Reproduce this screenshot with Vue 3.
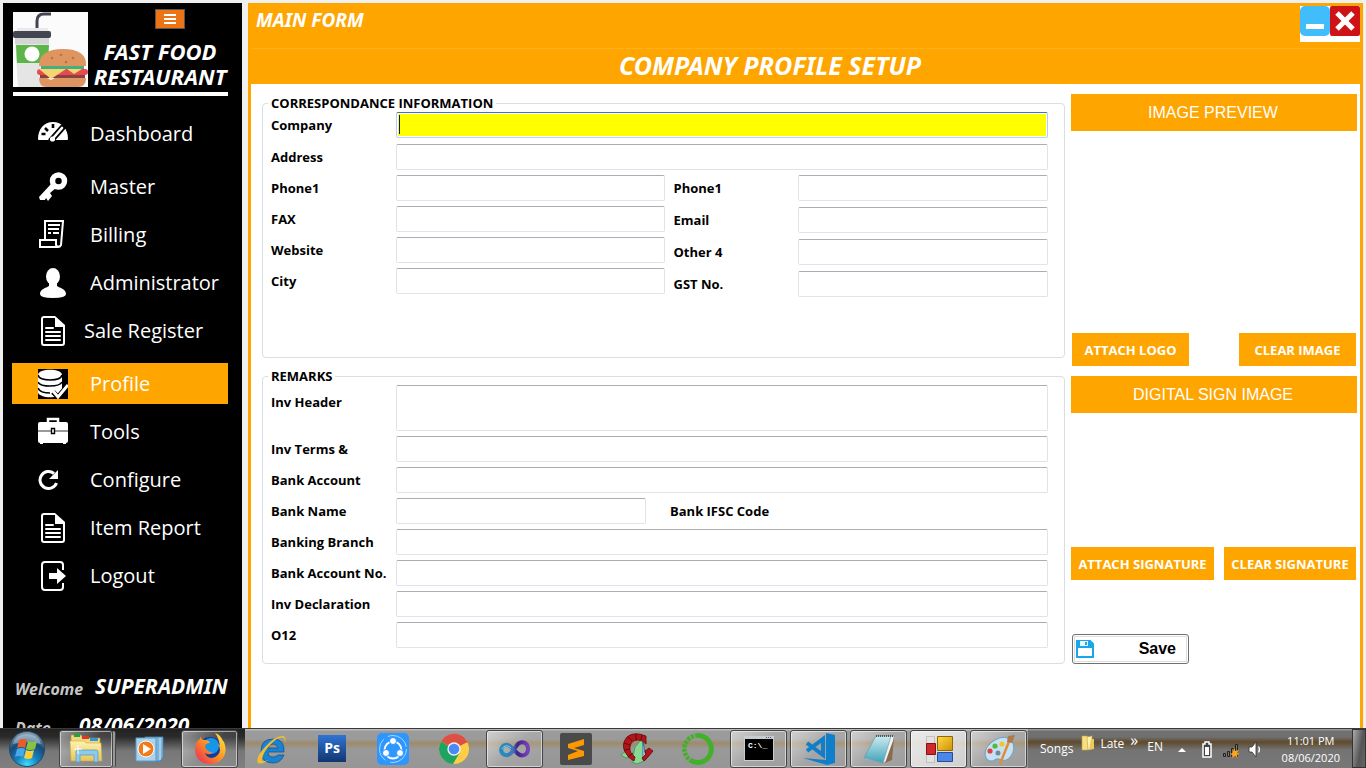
<script setup>
const menuGroups = [
  [{ label: 'Dashboard', icon: 'gauge' }],
  [
    { label: 'Master', icon: 'key' },
    { label: 'Billing', icon: 'receipt' },
    { label: 'Administrator', icon: 'user' },
    { label: 'Sale Register', icon: 'doc', wideIcon: true },
  ],
  [
    { label: 'Profile', icon: 'database', active: true },
    { label: 'Tools', icon: 'case' },
    { label: 'Configure', icon: 'reload' },
    { label: 'Item Report', icon: 'doc' },
    { label: 'Logout', icon: 'exit' },
  ],
]
const topFields = [
  { id: 'company', label: 'Company', focus: true },
  { id: 'address', label: 'Address' },
]
const leftFields = [
  { id: 'phone1', label: 'Phone1' },
  { id: 'fax', label: 'FAX' },
  { id: 'website', label: 'Website' },
  { id: 'city', label: 'City' },
]
const rightFields = [
  { id: 'phone2', label: 'Phone1' },
  { id: 'email', label: 'Email' },
  { id: 'other', label: 'Other 4' },
  { id: 'gst', label: 'GST No.' },
]
const remarkFields = [
  { id: 'header', label: 'Inv Header', tall: true },
  { id: 'terms', label: 'Inv Terms &' },
  { id: 'account', label: 'Bank Account' },
  { id: 'bank', label: 'Bank Name', extra: 'Bank IFSC Code' },
  { id: 'branch', label: 'Banking Branch' },
  { id: 'accountno', label: 'Bank Account No.' },
  { id: 'declaration', label: 'Inv Declaration' },
  { id: 'o12', label: 'O12' },
]
const pinned = [
  { icon: 'explorer', label: 'Explorer', open: true, stacked: true },
  { icon: 'media', label: 'Media Player' },
  { icon: 'firefox', label: 'Firefox', open: true },
  { icon: 'ie', label: 'Internet Explorer' },
  { icon: 'ps', label: 'Photoshop' },
  { icon: 'share', label: 'SHAREit' },
  { icon: 'chrome', label: 'Chrome' },
  { icon: 'vs', label: 'Visual Studio', open: true },
  { icon: 'sublime', label: 'Sublime Text' },
  { icon: 'ribbon', label: 'Designer' },
  { icon: 'anaconda', label: 'Anaconda' },
]
const running = [
  { icon: 'cmd', label: 'Command Prompt' },
  { icon: 'vscode', label: 'Visual Studio Code' },
  { icon: 'notepad', label: 'Notepad' },
  { icon: 'forms', label: 'Company Profile', current: true },
  { icon: 'paint', label: 'Paint' },
]
</script>

<template>
  <div class="desktop">
    <svg class="defs" aria-hidden="true">
      <defs>
        <linearGradient id="gBlue" x1="0" y1="0" x2="0" y2="1"><stop offset="0" stop-color="#2f74d4" /><stop offset="1" stop-color="#12366f" /></linearGradient>
        <radialGradient id="gOrb" cx=".5" cy=".95" r=".9"><stop offset="0" stop-color="#3fe0ff" /><stop offset=".35" stop-color="#1482c0" /><stop offset=".7" stop-color="#174a78" /><stop offset="1" stop-color="#7d99b0" /></radialGradient>
        <linearGradient id="gVs" x1="0" y1="0" x2="1" y2="0"><stop offset="0" stop-color="#1f8fc0" /><stop offset=".45" stop-color="#3f78b8" /><stop offset=".6" stop-color="#43208a" /><stop offset="1" stop-color="#7444b8" /></linearGradient>
        <linearGradient id="gFox" x1="1" y1="0" x2="0" y2="1"><stop offset="0" stop-color="#fff04a" /><stop offset=".45" stop-color="#ff9a1c" /><stop offset="1" stop-color="#e8205f" /></linearGradient>
        <linearGradient id="gPad" x1="0" y1="0" x2="0" y2="1"><stop offset="0" stop-color="#cdebf0" /><stop offset="1" stop-color="#3fa3b8" /></linearGradient>
        <linearGradient id="gGold" x1="0" y1="0" x2="1" y2="1"><stop offset="0" stop-color="#ffd84a" /><stop offset="1" stop-color="#cf9200" /></linearGradient>
        <linearGradient id="gFolder" x1="0" y1="0" x2="0" y2="1"><stop offset="0" stop-color="#fff3b0" /><stop offset="1" stop-color="#e6c65a" /></linearGradient>
      </defs>
      <symbol id="gauge" viewBox="0 0 30 30">
        <path d="M0 20C0 10 6 3 15 3s15 7 15 17c0 1-1 1-2 1H2c-1 0-2 0-2-1z" fill="#fff" />
        <path d="M3.500 15h4M7 9l3 3M15 5v4" stroke="#000" stroke-width="2.600" />
        <path d="M25 8L13.500 21" stroke="#000" stroke-width="6" stroke-linecap="round" /><path d="M24 9L14 20.500" stroke="#fff" stroke-width="2.600" stroke-linecap="round" />
        <circle cx="14.500" cy="20" r="2.600" fill="#fff" />
      </symbol>
      <symbol id="key" viewBox="0 0 30 30">
        <path d="M13 12L1 25l1 3 5 0 1-2 2 3 4-5-2-3 6-5z" fill="#fff" />
        <circle cx="20.500" cy="9" r="6" fill="none" stroke="#fff" stroke-width="5.500" />
      </symbol>
      <symbol id="receipt" viewBox="0 0 30 30">
        <path d="M7 20V1h18l-2 24q-1 2-3 2H2v-7h16v5q1 2 3 2" fill="none" stroke="#fff" stroke-width="2" />
        <path d="M10 5h12M10 9h11M10 13h3M15 13h6" stroke="#fff" stroke-width="2" />
      </symbol>
      <symbol id="user" viewBox="0 0 30 30">
        <ellipse cx="15" cy="8.500" rx="7" ry="8.500" fill="#fff" />
        <path d="M11 14h8v4c3 2 9 3 9 8q0 4-13 4T2 26c0-5 6-6 9-8z" fill="#fff" />
      </symbol>
      <symbol id="doc" viewBox="0 0 30 30">
        <path d="M17 1H6Q4 1 4 3v24q0 2 2 2h18q2 0 2-2V10" fill="none" stroke="#fff" stroke-width="2" />
        <path d="M17 0l10 9v2H17z" fill="#fff" />
        <path d="M8 12h7M8 16h14M8 20h14M8 24h14" stroke="#fff" stroke-width="2" stroke-linecap="round" />
      </symbol>
      <symbol id="database" viewBox="0 0 30 30">
        <path d="M0 0h30v30H0z" fill="#000" />
        <path d="M0 6C0-1 24-1 24 6v17c-3 8-24 6-24 0z" fill="#fff" />
        <path d="M0 6q1 5 12 5t12-5M0 13q2 4 12 4t12-4M0 19q2 5 12 5" fill="none" stroke="#000" stroke-width="1.600" />
        <path d="M15 23l5 5 10-12" fill="none" stroke="#000" stroke-width="5" /><path d="M15 22l5 6 10-12" fill="none" stroke="#fff" stroke-width="3" />
      </symbol>
      <symbol id="case" viewBox="0 0 30 30">
        <path d="M10 5V2h10v3" fill="none" stroke="#fff" stroke-width="2.500" />
        <path d="M2 5h26q2 0 2 2v17q0 2-2 2v1h-3v-1H5v1H2v-1q-2 0-2-2V7q0-2 2-2z" fill="#fff" />
        <path d="M0 14h30" stroke="#999" stroke-width="2" /><path d="M13.500 11.500h3v5h-3z" fill="#fff" stroke="#000" stroke-width="1.400" />
      </symbol>
      <symbol id="reload" viewBox="0 0 30 30">
        <path d="M16 8.500A8.500 8.500 0 1 0 18.500 18" fill="none" stroke="#fff" stroke-width="3" />
        <path d="M20 5v9H11z" fill="#fff" />
      </symbol>
      <symbol id="exit" viewBox="0 0 30 30">
        <path d="M25 9V4q0-3-3-3H7Q4 1 4 4v22q0 3 3 3h15q3 0 3-3v-4" fill="none" stroke="#fff" stroke-width="2" />
        <path d="M11 12h8V7l9 8-9 8v-5h-8z" fill="#fff" />
      </symbol>

      <symbol id="explorer" viewBox="0 0 34 34">
        <path d="M2 7V3h10l2 3h17v22H2z" fill="#f3d77e" stroke="#b8963c" stroke-width=".6" />
        <path d="M5 2h6v3H5z" fill="#1ca832" /><path d="M13 4h7v3h-7z" fill="#d83a2a" /><path d="M21 6h8v3h-8z" fill="#2a9ae0" />
        <path d="M1 9h14l2 2h15l1 18H2z" fill="url(#gFolder)" stroke="#caa64a" stroke-width=".6" />
        <path d="M7 30V20q0-2 2-2h18q2 0 2 2v10h-4v-7H11v7z" fill="#8ecbea" stroke="#5a9cc8" stroke-width=".8" />
        <path d="M9 13v9M5 17h8" stroke="#fff" stroke-width="1" />
      </symbol>
      <symbol id="media" viewBox="0 0 34 34">
        <path d="M13 5h18v20l-3 4H13z" fill="#78b4dc" stroke="#4a89b5" stroke-width=".8" /><path d="M28 6v22" stroke="#cfe7f5" />
        <path d="M4 6h20v23H4z" fill="#a8d4ef" stroke="#5d9bc4" />
        <circle cx="14" cy="17" r="8" fill="#f47a18" stroke="#fff" /><path d="M11 12l8 5-8 5z" fill="#fff" />
      </symbol>
      <symbol id="firefox" viewBox="0 0 34 34">
        <circle cx="17" cy="18" r="13" fill="#173b9c" /><circle cx="18" cy="14" r="8" fill="#1696e8" />
        <path d="M7 4q1 4 5 4 4 0 5 3-5 0-5 4 3 6 8 5-3 4-8 1 3 7 10 4 8-5 3-13 2 1 2 3Q26 6 22 1q5 1 8 8l1 1q4 10-2 17-6 6-14 5Q2 30 2 16 3 9 7 7z" fill="url(#gFox)" />
      </symbol>
      <symbol id="ie" viewBox="0 0 34 34">
        <path d="M30 20H14q0 5 5 5 3 0 5-2h6q-3 8-11 8Q7 31 7 19T19 7q12 0 11 13zM14 16h10q-1-4-5-4t-5 4z" fill="#1a83d0" stroke="#0d4f93" stroke-width=".7" fill-rule="evenodd" />
        <path d="M31 11q2-7-3-7-7 0-17 11T4 31q4 2 10-3-7 3-6-1 1-7 9-15T30 6q1 1 1 5z" fill="#f4bd30" />
      </symbol>
      <symbol id="ps" viewBox="0 0 34 34">
        <path d="M3 3h28v27H3z" fill="url(#gBlue)" />
      </symbol>
      <symbol id="share" viewBox="0 0 34 34">
        <rect x="1" y="1" width="32" height="32" rx="5" fill="#2d97ff" />
        <circle cx="17" cy="17" r="13.500" fill="none" stroke="#b9dcff" stroke-width=".9" stroke-dasharray="24 5" />
        <circle cx="17" cy="18" r="8.500" fill="none" stroke="#fff" stroke-width="1.800" />
        <circle cx="17" cy="9" r="3.500" fill="#fff" stroke="#2d97ff" /><circle cx="10" cy="21" r="3.500" fill="#fff" stroke="#2d97ff" /><circle cx="24" cy="21" r="3.500" fill="#fff" stroke="#2d97ff" />
      </symbol>
      <symbol id="chrome" viewBox="0 0 34 34">
        <circle cx="17" cy="17" r="15" fill="#ffce44" />
        <path d="M17 17L4 9.500A15 15 0 0 1 30.500 10z" fill="#dd5144" /><path d="M4 9.500A15 15 0 0 0 16 32l6.500-11L17 17z" fill="#1ea362" />
        <path d="M17 10h13.500" stroke="#dd5144" stroke-width="1" />
        <circle cx="17" cy="17" r="6.700" fill="#f1f1f1" /><circle cx="17" cy="17" r="5.300" fill="#4a8af4" />
      </symbol>
      <symbol id="vs" viewBox="0 0 34 34">
        <path d="M3 18c1-6 7-7 11-2l5 5c4 4 11 3 11-4s-7-9-11-4l-5 7c-4 5-10 4-11-2z" fill="none" stroke="url(#gVs)" stroke-width="4" />
        <path d="M4 17c2-4 6-4 9-1" fill="none" stroke="#8bd7ec" stroke-width="1" />
      </symbol>
      <symbol id="sublime" viewBox="0 0 34 34">
        <rect x="1" y="1" width="32" height="32" rx="2" fill="#4a4a4a" />
        <path d="M9 12l16-5v6L15 16l10 3v5L9 28v-5l10-4-10-3z" fill="#ff9800" />
      </symbol>
      <symbol id="ribbon" viewBox="0 0 34 34">
        <path d="M1 23l6-5 4 6-5 2zM12 30l3-15 7-8 4 21-9 4z" fill="#86d892" stroke="#3b8c48" stroke-width=".7" /><path d="M23 9l3 18-3 1z" fill="#e4f0ff" stroke="#3568a8" />
        <path d="M26 4Q14-1 7 5 1 12 5 20q3 6 9 9l1-4q-6-4-5-10 1-7 8-7 5 0 8 4zM25 19l4-3 4 3-5 6-4 4-2-3 4-4z" fill="#b31519" stroke="#5c0a0c" stroke-width=".8" />
        <path d="M8 5l4 4M4 11l6 2M4 18l6-1M8 25l5-4M16 2l0 6M22 3l-1 5" stroke="#5c0a0c" stroke-width=".9" />
      </symbol>
      <symbol id="anaconda" viewBox="0 0 34 34">
        <path d="M17 3.500a13.500 13.500 0 1 1-8 24.500" fill="none" stroke="#43b02a" stroke-width="5" />
        <path d="M17 3.500A13.500 13.500 0 0 0 9 28" fill="none" stroke="#43b02a" stroke-width="4.500" stroke-dasharray="3 1.200" />
      </symbol>
      <symbol id="cmd" viewBox="0 0 34 34">
        <path d="M2 4h30v25H2z" fill="#c8ccd0" /><path d="M3 7h28v21H3z" fill="#000" /><path d="M24 5.500h6" stroke="#456" stroke-dasharray="1 1" />
      </symbol>
      <symbol id="vscode" viewBox="0 0 34 34">
        <path d="M24 1l9 2v28l-8 2L1 26l23 2z" fill="#0f7ecb" />
        <path d="M5 11l16 12V7L5 19" fill="none" stroke="#0f7ecb" stroke-width="4" />
      </symbol>
      <symbol id="notepad" viewBox="0 0 34 34">
        <path d="M14 4h18l-2 23-9 4L2 27z" fill="#f2f2f2" stroke="#99a" stroke-width=".7" /><path d="M14 4h15l-8 27-19-5z" fill="url(#gPad)" stroke="#609aa8" stroke-width=".6" />
        <path d="M14 4h17" stroke="#555" stroke-width="2" stroke-dasharray="1 1" /><path d="M32 6l-2 22-7 3z" fill="#8a6b4b" />
      </symbol>
      <symbol id="forms" viewBox="0 0 34 34">
        <path d="M4.500 4.500h8v26h-8z" fill="#e2e2e2" stroke="#aaa" stroke-width=".6" />
        <path d="M4.500 11.500h9v11h-9z" fill="#d1292b" stroke="#831012" /><path d="M15.500 4.500h15v14h-15z" fill="url(#gGold)" stroke="#8d6805" /><path d="M15.500 20.500h15v9h-15z" fill="#4c86e8" stroke="#264d96" />
      </symbol>
      <symbol id="paint" viewBox="0 0 34 34">
        <path d="M3 22q0-8 10-14t17 1q4 8-1 15t-12 3q-3-1-6 2-7 1-8-7z" fill="#c4e2f4" stroke="#6d9fc2" />
        <circle cx="8" cy="19" r="2.600" fill="#e04040" /><circle cx="13" cy="14" r="2.600" fill="#55b845" /><circle cx="20" cy="12" r="2.600" fill="#f5c22c" /><circle cx="16" cy="21" r="2.500" fill="#738a99" />
        <path d="M28 7L18 32" stroke="#e58a35" stroke-width="2.500" /><path d="M26 4l7-1-3 8-5-1z" fill="#ae7a4d" />
      </symbol>
    </svg>

    <div class="workspace">
      <aside class="sidebar">
        <header class="brand">
          <svg class="brand-logo" viewBox="0 0 75 75" role="img" aria-label="Fast food">
            <path d="M0 0h75v75H0z" fill="#fbfbfb" />
            <path d="M24 17V9q0-7 7-7h7" fill="none" stroke="#434553" stroke-width="3" />
            <path d="M4 16h31v4H4z" fill="#e9e9e9" /><rect y="19" width="38" height="7" rx="2" fill="#434553" />
            <path d="M2 26h34l-3 49H5z" fill="#e5e5e5" /><path d="M2 26h34v6H2z" fill="#d5d5d5" /><path d="M3 33h33l-1 18H4z" fill="#5cb548" /><circle cx="19" cy="42" r="7.500" fill="#fff" />
            <path d="M26 54q0-17 24-17t23 17z" fill="#df955f" /><path d="M28 54h43v3H28z" fill="#45b07e" />
            <rect x="24" y="57" width="51" height="6" rx="3" fill="#e9494d" /><path d="M27 63h45v3H27z" fill="#874245" />
            <path d="M26 57h27L38 67zM54 57h15l-8 5z" fill="#f4d56f" /><path d="M26 66h8l4 2 4-2h31q0 9-8 9H34q-8 0-8-9z" fill="#df955f" />
            <g fill="#b87445"><circle cx="39" cy="46" r="1.300" /><circle cx="48" cy="43" r="1.300" /><circle cx="53" cy="50" r="1.300" /><circle cx="60" cy="46" r="1.300" /></g>
          </svg>
          <div class="brand-text">
            <button class="menu-toggle" type="button" aria-label="Menu">
              <svg viewBox="0 0 12 12"><path d="M0 2h12M0 6h12M0 10h12" stroke="#fff" stroke-width="2" /></svg>
            </button>
            <h1>FAST FOOD<br />RESTAURANT</h1>
          </div>
        </header>
        <nav class="menu">
          <ul v-for="(group, g) in menuGroups" :key="g">
            <li v-for="item in group" :key="item.label">
              <a href="#" :class="{ active: item.active, 'near-icon': item.wideIcon }">
                <svg><use :href="'#' + item.icon" /></svg>
                <span>{{ item.label }}</span>
              </a>
            </li>
          </ul>
        </nav>
        <dl class="session">
          <div><dt>Welcome</dt><dd>SUPERADMIN</dd></div>
          <div><dt>Date</dt><dd class="date">08/06/2020</dd></div>
        </dl>
      </aside>

      <main class="window">
        <header class="titlebar">
          <span class="form-name">MAIN FORM</span>
          <div class="window-buttons">
            <button type="button" aria-label="Minimize"><svg viewBox="0 0 30 30"><rect width="30" height="30" rx="5" fill="#42bdfc" /><path d="M6 18h18v5H6z" fill="#fff" /></svg></button>
            <button type="button" aria-label="Close"><svg viewBox="0 0 30 30"><rect width="30" height="30" rx="2" fill="#cf1215" /><path d="M7 7l16 16M23 7L7 23" stroke="#fff" stroke-width="5" /></svg></button>
          </div>
        </header>
        <h2 class="page-title">COMPANY PROFILE SETUP</h2>
        <form class="content" @submit.prevent>
          <div class="forms">
            <fieldset class="correspondence">
              <legend>CORRESPONDANCE INFORMATION</legend>
              <div class="stack wide">
                <div v-for="f in topFields" :key="f.id" class="row">
                  <label :for="f.id">{{ f.label }}</label>
                  <input :id="f.id" type="text" :class="{ focused: f.focus }" />
                </div>
              </div>
              <div class="pair">
                <div class="stack left">
                  <div v-for="f in leftFields" :key="f.id" class="row">
                    <label :for="f.id">{{ f.label }}</label><input :id="f.id" type="text" />
                  </div>
                </div>
                <div class="stack right">
                  <div v-for="f in rightFields" :key="f.id" class="row">
                    <label :for="f.id">{{ f.label }}</label><input :id="f.id" type="text" />
                  </div>
                </div>
              </div>
            </fieldset>
            <fieldset class="remarks">
              <legend>REMARKS</legend>
              <div class="stack">
                <div v-for="f in remarkFields" :key="f.id" class="row" :class="{ tall: f.tall, short: f.extra }">
                  <label :for="f.id">{{ f.label }}</label>
                  <textarea v-if="f.tall" :id="f.id"></textarea>
                  <input v-else :id="f.id" type="text" />
                  <span v-if="f.extra" class="extra">{{ f.extra }}</span>
                </div>
              </div>
            </fieldset>
          </div>
          <div class="images">
            <section class="image-box logo-box">
              <h3>IMAGE PREVIEW</h3>
              <div class="actions"><button type="button">ATTACH LOGO</button><button type="button">CLEAR IMAGE</button></div>
            </section>
            <section class="image-box sign-box">
              <h3>DIGITAL SIGN IMAGE</h3>
              <div class="actions"><button type="button">ATTACH SIGNATURE</button><button type="button">CLEAR SIGNATURE</button></div>
            </section>
            <button class="save" type="submit">
              <svg viewBox="0 0 18 18"><path d="M1 1h13l3 3v13H1z" fill="#fff" stroke="#1aa7ea" stroke-width="2" /><path d="M1 1h13l3 3v4H1z" fill="#1aa7ea" /><path d="M4 1h8v5H4z" fill="#e8f6fd" /><path d="M10 2v3" stroke="#1aa7ea" stroke-width="2" /></svg>
              <span>Save</span>
            </button>
          </div>
        </form>
      </main>
    </div>

    <footer class="taskbar">
      <button class="start" type="button" aria-label="Start">
        <svg viewBox="0 0 38 38"><circle cx="19" cy="19" r="17.500" fill="url(#gOrb)" stroke="#244866" /><path d="M5 14Q8 4 19 4t14 10q-13-4-28 0z" fill="#fff" opacity=".35" />
          <path d="M11 10q4-2 8 0l-2 8q-4-2-8 0z" fill="#ec5a28" /><path d="M20 11q4 2 9 0l-2 8q-5 2-9 0z" fill="#86c440" /><path d="M9 19q4-2 8 0l-2 8q-4-2-8 0z" fill="#48a8e8" /><path d="M18 20q4 2 8 0l-2 8q-4 2-8 0z" fill="#fccd35" /></svg>
      </button>
      <div class="apps">
        <button v-for="a in pinned" :key="a.icon" type="button" :aria-label="a.label" class="app" :class="{ open: a.open, stacked: a.stacked }">
          <svg viewBox="0 0 34 34"><use :href="'#' + a.icon" /><text v-if="a.icon === 'ps'" class="ps-text" x="17" y="21" text-anchor="middle">Ps</text></svg>
        </button>
      </div>
      <div class="apps running">
        <button v-for="a in running" :key="a.icon" type="button" :aria-label="a.label" class="app open" :class="{ current: a.current }">
          <svg viewBox="0 0 34 34"><use :href="'#' + a.icon" /><text v-if="a.icon === 'cmd'" class="cmd-text" x="6" y="16">C:\_</text></svg>
        </button>
      </div>
      <div class="tray">
        <span class="songs">Songs</span>
        <span class="late"><svg viewBox="0 0 14 16"><path d="M1 1h5l1 2v12H1z" fill="#f5de86" stroke="#c9a63a" stroke-width=".6" /><path d="M6 2l5-1v12l-4 2z" fill="#fff1aa" stroke="#c9a63a" stroke-width=".6" /><path d="M10 4h3v10l-5 1z" fill="#e9c95f" /></svg>Late</span>
        <span class="more">»</span>
        <span class="lang">EN</span>
        <svg class="tray-icons" viewBox="0 0 84 20">
          <path d="M0 13l4-4 4 4z" fill="#fff" />
          <path d="M27 3h4v2h2v13h-8V5h2z" fill="#444" stroke="#fff" stroke-width="1.500" /><path d="M27 8h4v8h-4z" fill="#fff" />
          <path d="M45.500 14.500h2v3h-2zM49.500 12.500h2v5h-2zM53.500 9.500h2v8h-2zM57.500 5.500h2v12h-2z" fill="#777" stroke="#222" /><path d="M56 9l1.500 3 3-1-1 3 2 1-2.500 1 .5 3-2.500-2-3 2 .5-3-3-1 3-1z" fill="#ffa319" />
          <path d="M71 8h3l4-5v15l-4-5h-3z" fill="#fff" stroke="#333" stroke-width=".8" /><path d="M80.500 7.500q2 3 0 6" fill="none" stroke="#fff" stroke-width="1.200" />
        </svg>
        <time class="clock">11:01 PM<br />08/06/2020</time>
        <button class="show-desktop" type="button" aria-label="Show desktop"></button>
      </div>
    </footer>
  </div>
</template>

<style>
body { margin: 0; }
</style>

<style scoped>
* { box-sizing: border-box; }
.defs { position: absolute; width: 0; height: 0; }
.desktop { display: flex; flex-direction: column; height: 100vh; overflow: hidden; background: #f0f0f0; font-family: "Open Sans", "Noto Sans", sans-serif; }
button { margin: 0; padding: 0; border: 0; background: none; font-family: inherit; cursor: pointer; }
svg { display: block; flex: none; }

.workspace { flex: 1; min-height: 0; display: grid; grid-template-columns: 239px minmax(0, 1fr); gap: 6px; padding: 3px 3px 0; overflow: hidden; }
.sidebar { background: #000; color: #fff; overflow: hidden; }
.brand { display: flex; justify-content: space-between; margin: 0 14px 0 10px; padding: 6px 0 3px; border-bottom: 4px solid #fff; height: 93px; }
.brand-logo { width: 75px; height: 75px; margin-top: 3px; }
.brand-text { display: flex; flex-direction: column; align-items: center; flex: 1; margin-left: 4px; }
.menu-toggle { display: flex; align-items: center; justify-content: center; width: 30px; height: 23px; margin-left: 20px; background: #ec7414; border: 1px solid #555; }
.menu-toggle svg { width: 12px; height: 12px; }
h1 { margin: 10px 0 0; font: italic 700 22px/25px "Noto Sans", sans-serif; text-align: center; white-space: nowrap; }
.menu { display: flex; flex-direction: column; gap: 12px; margin: 17px 14px 0 9px; }
.menu ul { display: flex; flex-direction: column; gap: 7px; margin: 0; padding: 0; list-style: none; }
.menu a { display: flex; align-items: center; gap: 22px; height: 41px; padding-left: 26px; color: #fff; font-size: 20px; text-decoration: none; }
.menu a.active { background: #ffa500; }
.menu a.near-icon { gap: 16px; }
.menu svg { width: 30px; height: 30px; }
.session { margin: 70px 0 0; padding: 0 6px 0 12px; font: italic 700 21px "Noto Sans", sans-serif; white-space: nowrap; }
.session div { display: flex; align-items: center; gap: 12px; height: 39px; }
.session dt { width: 68px; font-size: 16px; color: #c4c4c4; padding-top: 6px; }
.session dd { margin: 0; }
.session dd.date { margin-left: -16px; }

.window { display: flex; flex-direction: column; min-height: 0; border: solid #ffa500; border-width: 0 3px; background: #fff; }
.titlebar { display: flex; justify-content: space-between; height: 46px; padding: 3px 0 0 5px; background: #ffa500; border-bottom: 1px solid #ffae1c; color: #fff; flex: none; }
.form-name { font: italic 700 19px/28px "Noto Sans", sans-serif; }
.window-buttons { display: flex; align-items: flex-start; height: 36px; background: #fff; }
.window-buttons svg { width: 30px; height: 30px; }
.page-title { flex: none; margin: 0; height: 35px; background: #ffa500; color: #fff; text-align: center; font: italic 700 25px/32px "Noto Sans", sans-serif; padding-right: 71px; }
.content { display: flex; gap: 6px; padding: 10px 3px 0 11px; }
.forms { flex: 1; min-width: 0; display: flex; flex-direction: column; gap: 9px; }
fieldset { min-width: 0; margin: 0; padding: 0 16px 0 8px; border: 1px solid #d5dfe5; border-radius: 4px; }
legend { margin-left: -3px; padding: 0 3px; font-size: 13px; font-weight: 700; line-height: 18px; }
.correspondence { min-height: 264px; }
.remarks { padding-bottom: 15px; }
.stack { display: flex; flex-direction: column; gap: 5px; }
.stack.wide { gap: 6px; margin-bottom: 5px; }
.pair { display: grid; grid-template-columns: minmax(0, 393fr) minmax(0, 374fr); gap: 9px; align-items: start; }
.stack.right { gap: 6px; }
.row { display: flex; align-items: center; font-size: 13px; font-weight: 700; }
.row label { flex: none; width: 125px; line-height: 26px; white-space: nowrap; }
.right .row label { width: 124px; }
input, textarea { flex: 1; min-width: 0; height: 26px; margin: 0; padding: 1px 3px; border: 1px solid #e2e3ea; border-top-color: #abadb3; border-radius: 2px; background: #fff; outline: 0; font: inherit; resize: none; }
textarea { height: 46px; }
.row.tall { align-items: flex-start; }
.row.tall label { padding-top: 4px; }
.row.short input { flex: 0 1 250px; }
.extra { margin-left: 24px; }
input.focused { border-color: #3d7bad #b5cfe7 #b7d9ed; box-shadow: inset 0 0 0 1px #fff; background: linear-gradient(#001080, #001080) 2px 2px / 1px 19px no-repeat, #ff0; }

.images { flex: none; width: 286px; display: flex; flex-direction: column; }
.image-box { display: flex; flex-direction: column; justify-content: space-between; }
.logo-box { height: 272px; margin-bottom: 10px; }
.sign-box { height: 204px; margin-bottom: 54px; }
h3 { margin: 0; background: #ffa500; color: #fff; text-align: center; font: 400 16px/37px "Liberation Sans", sans-serif; padding-right: 2px; }
.actions { display: flex; justify-content: space-between; padding-right: 1px; }
.actions button { height: 33px; background: #ffa500; color: #fff; font-size: 13px; font-weight: 700; padding: 0; white-space: nowrap; }
.logo-box .actions { padding-left: 1px; }
.logo-box .actions button { width: 117px; }
.sign-box .actions button:first-child { width: 143px; }
.sign-box .actions button:last-child { width: 132px; }
.save { display: flex; align-items: center; justify-content: space-between; width: 117px; height: 30px; margin-left: 1px; padding: 0 12px 0 3px; border: 1px solid #707070; border-radius: 3px; background: #fff; box-shadow: inset 0 0 0 1px #fff, inset 0 0 0 2px #ddd; font: 700 16px "Liberation Sans", sans-serif; color: #000; }
.save svg { width: 18px; height: 18px; }

.taskbar { flex: none; display: flex; align-items: center; height: 40px; border-top: 1px solid #3a3a3a; background: linear-gradient(#222 0, #2b2b2b 8px, #777 22px, #7f7f7f) 0 0 / 245px 100% no-repeat, linear-gradient(#bcbcbc 0 1px, #9b9b9b 2px 10px, #9d8b6b 14px, #999 20px, #969696); }
.start { width: 38px; margin-left: 8px; }
.start svg { width: 38px; height: 38px; }
.apps { display: flex; gap: 4px; margin-left: 13px; }
.apps.running { gap: 3px; margin-left: 4px; }
.app { display: flex; align-items: center; justify-content: center; width: 57px; height: 38px; border: 1px solid transparent; border-radius: 3px; }
.app svg { width: 34px; height: 34px; }
.ps-text { fill: #fff; font: 700 14px "Open Sans", sans-serif; }
.cmd-text { fill: #fff; font: 700 8px "Liberation Mono", monospace; }
.app.open { border-color: #444; background: linear-gradient(135deg, #ffffff88, #ffffff22 50%, #ffffff11); box-shadow: inset 0 0 0 1px #ffffff88; }
.app.stacked { box-shadow: inset 0 0 0 1px #ffffff88, 3px 0 0 -1px #999, 4px 0 0 -1px #444; width: 54px; margin-right: 3px; }
.app.current { background: linear-gradient(135deg, #ffffffcc, #ffffff88); }
.tray { flex: 1; align-self: stretch; display: flex; align-items: center; color: #fff; font-size: 12px; margin-left: 1px; background: linear-gradient(#999 0 1px, #707070 2px 8px, #5e4a2d 13px, #747474 21px, #777); }
.songs { margin-left: 12px; }
.late { display: flex; gap: 5px; margin: 0 6px 10px 8px; }
.late svg { width: 14px; height: 16px; }
.more { margin-bottom: 18px; font-size: 16px; line-height: 16px; }
.lang { margin: 0 15px 4px 9px; }
.tray-icons { width: 84px; height: 20px; }
.clock { margin-left: auto; text-align: center; font-size: 11px; line-height: 17px; }
.show-desktop { align-self: stretch; width: 14px; margin-left: 12px; border: 1px solid #333; background: linear-gradient(100deg, #aaa, #555 60%, #666); }
</style>
